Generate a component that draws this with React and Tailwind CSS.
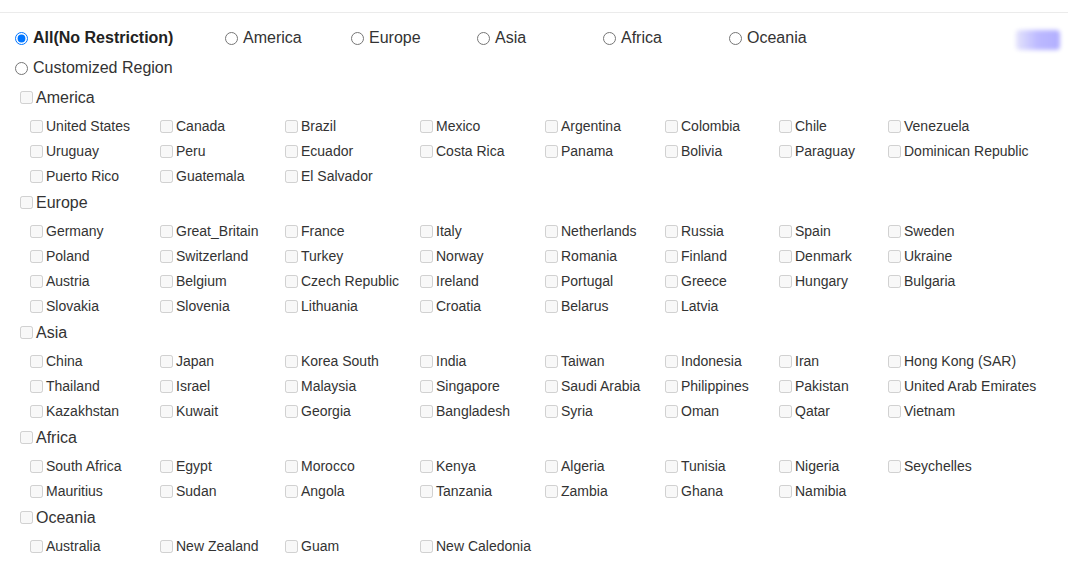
const REGIONS = ['America', 'Europe', 'Asia', 'Africa', 'Oceania'];

const COUNTRIES = {
  America: [
    'United States', 'Canada', 'Brazil', 'Mexico', 'Argentina', 'Colombia', 'Chile', 'Venezuela',
    'Uruguay', 'Peru', 'Ecuador', 'Costa Rica', 'Panama', 'Bolivia', 'Paraguay', 'Dominican Republic',
    'Puerto Rico', 'Guatemala', 'El Salvador',
  ],
  Europe: [
    'Germany', 'Great_Britain', 'France', 'Italy', 'Netherlands', 'Russia', 'Spain', 'Sweden',
    'Poland', 'Switzerland', 'Turkey', 'Norway', 'Romania', 'Finland', 'Denmark', 'Ukraine',
    'Austria', 'Belgium', 'Czech Republic', 'Ireland', 'Portugal', 'Greece', 'Hungary', 'Bulgaria',
    'Slovakia', 'Slovenia', 'Lithuania', 'Croatia', 'Belarus', 'Latvia',
  ],
  Asia: [
    'China', 'Japan', 'Korea South', 'India', 'Taiwan', 'Indonesia', 'Iran', 'Hong Kong (SAR)',
    'Thailand', 'Israel', 'Malaysia', 'Singapore', 'Saudi Arabia', 'Philippines', 'Pakistan', 'United Arab Emirates',
    'Kazakhstan', 'Kuwait', 'Georgia', 'Bangladesh', 'Syria', 'Oman', 'Qatar', 'Vietnam',
  ],
  Africa: [
    'South Africa', 'Egypt', 'Morocco', 'Kenya', 'Algeria', 'Tunisia', 'Nigeria', 'Seychelles',
    'Mauritius', 'Sudan', 'Angola', 'Tanzania', 'Zambia', 'Ghana', 'Namibia',
  ],
  Oceania: ['Australia', 'New Zealand', 'Guam', 'New Caledonia'],
};

function Radio({ label, checked, bold }) {
  return (
    <label className="flex items-center">
      <input type="radio" name="region" defaultChecked={checked} className="m-0 w-[13px] h-[13px]" />
      <span className={`ml-[5px] text-[16px] ${bold ? 'font-bold text-[#222]' : 'text-[#333]'}`}>{label}</span>
    </label>
  );
}

export default function App() {
  return (
    <div className="w-[1068px] h-[562px] bg-white overflow-hidden text-[#333]" style={{ fontFamily: '"Liberation Sans", Arial, sans-serif' }}>
      <div className="h-[12px]" />
      <div className="border-t border-[#ebebeb] pt-[10px] pl-[15px]">
        <div className="flex items-center h-[30px]">
          <div className="w-[210px]"><Radio label="All(No Restriction)" checked bold /></div>
          {REGIONS.map((r) => (
            <div key={r} className="w-[126px]"><Radio label={r} /></div>
          ))}
          <div className="ml-auto mr-[8px] mt-[4px] w-[44px] h-[20px] rounded-sm bg-gradient-to-r from-[#e4e3fb] via-[#bcb9ff] to-[#b2afff] blur-[2px]" />
        </div>
        <div className="flex items-center h-[30px] mb-[1px]">
          <Radio label="Customized Region" />
        </div>

        {REGIONS.map((r) => (
          <div key={r}>
            <label className="flex items-center h-[27px] pl-[5px]">
              <input type="checkbox" disabled className="m-0 w-[13px] h-[13px]" />
              <span className="ml-[3px] text-[16px] text-[#333]">{r}</span>
            </label>
            <div className="grid grid-cols-[130px_125px_135px_125px_120px_114px_109px_1fr] pl-[15px] pt-[3px]">
              {COUNTRIES[r].map((c) => (
                <label key={c} className="flex items-center h-[25px]">
                  <input type="checkbox" disabled className="m-0 w-[13px] h-[13px]" />
                  <span className="ml-[3px] text-[14px] text-[#333] whitespace-nowrap">{c}</span>
                </label>
              ))}
            </div>
          </div>
        ))}
      </div>
    </div>
  );
}
